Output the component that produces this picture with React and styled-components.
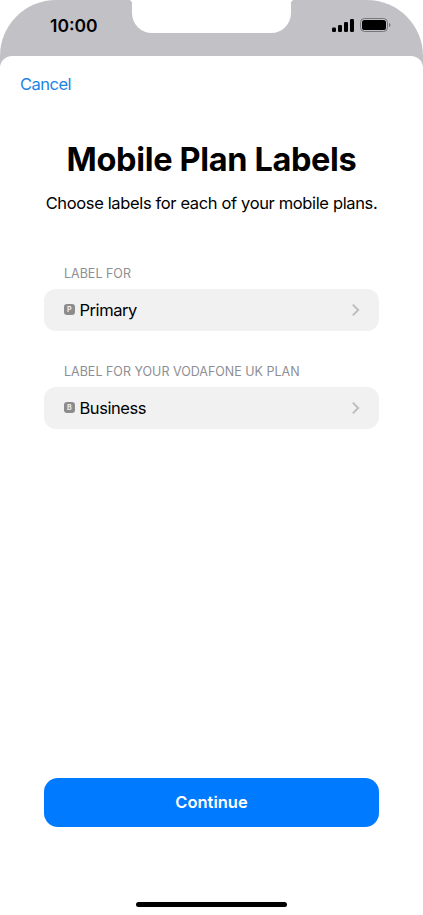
import React from "react";
import styled, { createGlobalStyle } from "styled-components";

const GlobalStyle = createGlobalStyle`
  html, body {
    margin: 0;
    padding: 0;
    background: #fff;
  }
  * {
    box-sizing: border-box;
  }
  body {
    font-family: Inter, "Liberation Sans", sans-serif;
    color: #000;
  }
`;

const Phone = styled.div`
  width: 423px;
  height: 915px;
  display: flex;
  flex-direction: column;
  overflow: hidden;
  background: #fff;
`;

const StatusBar = styled.div`
  height: 68px;
  flex: none;
  display: flex;
  align-items: flex-start;
  background: #c2c1c6;
  border-radius: 56px 56px 0 0;
`;

const StatusSide = styled.div`
  width: 132px;
  flex: none;
  height: 50px;
  display: flex;
  align-items: center;
  justify-content: ${(p) => (p.$end ? "flex-start" : "flex-end")};
  padding: ${(p) => (p.$end ? "0 0 0 50px" : "0 32px 0 0")};
`;

const Time = styled.span`
  font-size: 17.5px;
  font-weight: 600;
`;

const Notch = styled.div`
  position: relative;
  width: 159px;
  height: 33px;
  flex: none;
  background: #fff;
  border-radius: 0 0 20px 20px;

  &::before,
  &::after {
    content: "";
    position: absolute;
    top: 0;
    width: 4px;
    height: 4px;
  }
  &::before {
    left: -4px;
    background: radial-gradient(circle at 0 100%, transparent 4px, #fff 4.5px);
  }
  &::after {
    right: -4px;
    background: radial-gradient(circle at 100% 100%, transparent 4px, #fff 4.5px);
  }
`;

const Sheet = styled.main`
  flex: 1;
  margin-top: -12px;
  display: flex;
  flex-direction: column;
  background: #fff;
  border-radius: 12px 12px 0 0;
`;

const CancelLink = styled.a`
  margin: 18px 0 0 20px;
  font-size: 16.5px;
  line-height: 20px;
  letter-spacing: -0.5px;
  color: #1a84e5;
`;

const Title = styled.h1`
  margin: 45px 0 0;
  font-size: 32.5px;
  line-height: 42px;
  font-weight: 700;
  text-align: center;
  letter-spacing: -0.35px;
`;

const Subtitle = styled.p`
  margin: 11px 0 0;
  font-size: 16.5px;
  line-height: 22px;
  text-align: center;
  letter-spacing: -0.36px;
`;

const Form = styled.div`
  margin-top: 52px;
  padding: 0 44px;
  display: flex;
  flex-direction: column;
  gap: 33px;
`;

const Group = styled.section`
  display: flex;
  flex-direction: column;
  gap: 6.5px;
`;

const GroupLabel = styled.div`
  padding-left: 20px;
  font-size: 12.5px;
  line-height: 16px;
  color: #8e8e93;
`;

const Row = styled.div`
  height: 42.5px;
  display: flex;
  align-items: center;
  gap: 4.5px;
  padding: 0 19px 0 19.5px;
  background: #f1f1f2;
  border-radius: 12px;
`;

const Badge = styled.span`
  width: 11.5px;
  height: 11px;
  display: flex;
  align-items: center;
  justify-content: center;
  background: #8c8c8f;
  border-radius: 3px;
  color: #f1f1f2;
  font-size: 7px;
  font-weight: 700;
`;

const RowText = styled.span`
  flex: 1;
  font-size: 16.5px;
  letter-spacing: -0.45px;
`;

const Footer = styled.div`
  margin-top: auto;
  padding: 0 44px 8px;
  display: flex;
  flex-direction: column;
  align-items: center;
`;

const ContinueButton = styled.button`
  width: 100%;
  height: 49.5px;
  border: 0;
  border-radius: 14px;
  background: #007aff;
  color: #fff;
  font-family: inherit;
  font-size: 16.5px;
  font-weight: 600;
`;

const HomeBar = styled.div`
  width: 151px;
  height: 5px;
  margin-top: 75px;
  background: #000;
  border-radius: 3px;
`;

const SignalIcon = () => (
  <svg width="22" height="13" viewBox="0 0 22 13">
    <rect x="0" y="8.5" width="4" height="4.5" rx="1.2" fill="#000" />
    <rect x="6" y="6" width="4" height="7" rx="1.2" fill="#000" />
    <rect x="12" y="3" width="4" height="10" rx="1.2" fill="#000" />
    <rect x="18" y="0" width="4" height="13" rx="1.2" fill="#000" />
  </svg>
);

const BatteryIcon = () => (
  <svg width="31" height="14" viewBox="0 0 31 14" style={{ marginLeft: 6 }}>
    <rect x="0.5" y="0.5" width="27" height="13" rx="4" fill="none" stroke="#77767a" />
    <rect x="2" y="2" width="24" height="10" rx="2.6" fill="#000" />
    <path d="M29 5v4c.9-.3 1.5-1.1 1.5-2s-.6-1.7-1.5-2z" fill="#77767a" />
  </svg>
);

const Chevron = () => (
  <svg width="9" height="14" viewBox="0 0 9 14">
    <path d="M1.8 1.6 7.2 7l-5.4 5.4" fill="none" stroke="#bcbcbf" strokeWidth="1.9" />
  </svg>
);

const PlanRow = ({ badge, text }) => (
  <Row>
    <Badge>{badge}</Badge>
    <RowText>{text}</RowText>
    <Chevron />
  </Row>
);

export default function App() {
  return (
    <Phone>
      <GlobalStyle />
      <StatusBar>
        <StatusSide $end>
          <Time>10:00</Time>
        </StatusSide>
        <Notch />
        <StatusSide>
          <SignalIcon />
          <BatteryIcon />
        </StatusSide>
      </StatusBar>
      <Sheet>
        <CancelLink>Cancel</CancelLink>
        <Title>Mobile Plan Labels</Title>
        <Subtitle>Choose labels for each of your mobile plans.</Subtitle>
        <Form>
          <Group>
            <GroupLabel>LABEL FOR</GroupLabel>
            <PlanRow badge="P" text="Primary" />
          </Group>
          <Group>
            <GroupLabel>LABEL FOR YOUR VODAFONE UK PLAN</GroupLabel>
            <PlanRow badge="B" text="Business" />
          </Group>
        </Form>
        <Footer>
          <ContinueButton>Continue</ContinueButton>
          <HomeBar />
        </Footer>
      </Sheet>
    </Phone>
  );
}
